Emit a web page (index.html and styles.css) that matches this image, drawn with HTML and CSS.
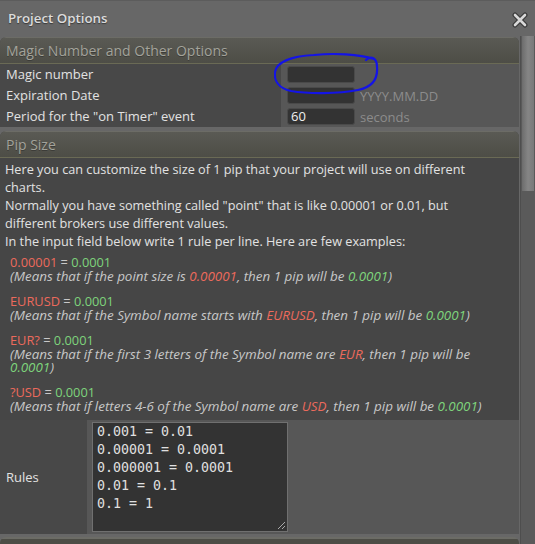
FILE: index.html
```html
<!DOCTYPE html>
<html>
<head>
<meta charset="utf-8">
<link rel="stylesheet" href="styles.css">
</head>
<body>
<div class="dialog">
  <div class="titlebar">
    <span class="title">Project Options</span>
    <svg class="close" width="16" height="16" viewBox="0 0 16 16">
      <path d="M3 3 L13 13 M13 3 L3 13" stroke="#3a3a3a" stroke-width="5" stroke-linecap="round"/>
      <path d="M3 3 L13 13 M13 3 L3 13" stroke="#d8d8d8" stroke-width="2.6" stroke-linecap="round"/>
    </svg>
  </div>
  <div class="main">
    <div class="content">
      <div class="panel">
        <div class="panel-head">Magic Number and Other Options</div>
        <div class="row">
          <div class="label">Magic number</div>
          <div class="field"><span class="input"></span></div>
        </div>
        <div class="row">
          <div class="label">Expiration Date</div>
          <div class="field"><span class="input"></span><span class="hint">YYYY.MM.DD</span></div>
        </div>
        <div class="row">
          <div class="label">Period for the "on Timer" event</div>
          <div class="field"><span class="input">60</span><span class="hint">seconds</span></div>
        </div>
      </div>
      <div class="panel">
        <div class="panel-head">Pip Size</div>
        <div class="desc">
          Here you can customize the size of 1 pip that your project will use on different charts.<br>
          Normally you have something called "point" that is like 0.00001 or 0.01, but different brokers use different values.<br>
          In the input field below write 1 rule per line. Here are few examples:
        </div>
        <div class="examples">
          <div class="ex"><div class="ex-rule"><span class="r">0.00001</span> = <span class="g">0.0001</span></div><i>(Means that if the point size is <span class="r">0.00001</span>, then 1 pip will be <span class="g">0.0001</span>)</i></div>
          <div class="ex"><div class="ex-rule"><span class="r">EURUSD</span> = <span class="g">0.0001</span></div><i>(Means that if the Symbol name starts with <span class="r">EURUSD</span>, then 1 pip will be <span class="g">0.0001</span>)</i></div>
          <div class="ex"><div class="ex-rule"><span class="r">EUR?</span> = <span class="g">0.0001</span></div><i>(Means that if the first 3 letters of the Symbol name are <span class="r">EUR</span>, then 1 pip will be <span class="g">0.0001</span>)</i></div>
          <div class="ex"><div class="ex-rule"><span class="r">?USD</span> = <span class="g">0.0001</span></div><i>(Means that if letters 4-6 of the Symbol name are <span class="r">USD</span>, then 1 pip will be <span class="g">0.0001</span>)</i></div>
        </div>
        <div class="rules">
          <div class="rules-label">Rules</div>
          <div class="rules-field">
            <div class="textarea">0.001 = 0.01
0.00001 = 0.0001
0.000001 = 0.0001
0.01 = 0.1
0.1 = 1</div>
          </div>
        </div>
      </div>
      <div class="panel next"></div>
    </div>
    <div class="scrollbar"><div class="thumb"></div></div>
  </div>
  <svg class="annot" width="108" height="44" viewBox="0 0 108 44">
    <path d="M92 8 C97 3 103 6 103 15 C104 27 99 35 84 38 C64 42 34 42 17 39 C4 36 0 28 1 20 C3 9 20 4 40 3 C60 1 85 2 100 7" fill="none" stroke="#1414e6" stroke-width="2.2" stroke-linecap="round"/>
  </svg>
</div>
</body>
</html>
```

FILE: styles.css
```css
html, body {
  margin: 0;
  padding: 0;
}
body {
  background: #676767;
  font-family: "Open Sans", "Noto Sans", sans-serif;
  width: 535px;
  height: 544px;
  overflow: hidden;
}
.dialog {
  position: relative;
  height: 544px;
  display: flex;
  flex-direction: column;
  border-top: 1px solid #5c5c5c;
  box-sizing: border-box;
}
.titlebar {
  height: 36px;
  flex: none;
  display: flex;
  align-items: center;
  justify-content: space-between;
  padding: 0 7px 0 8px;
}
.title {
  color: #dcdcdc;
  font-size: 13.3px;
  font-weight: 600;
  text-shadow: 0 1px 1px #3a3a3a;
  margin-top: -3px;
}
.close {
  margin-top: 1px;
}
.main {
  flex: 1;
  display: flex;
  min-height: 0;
}
.content {
  flex: 1;
  overflow: hidden;
}
.scrollbar {
  width: 14px;
  flex: none;
  background: #5a5a5a;
  border-left: 1px solid #4e4e4e;
  display: flex;
  flex-direction: column;
  margin-top: -1px;
}
.thumb {
  height: 155px;
  margin: 0 1px;
  background: linear-gradient(to right, #6c6c6c, #858585 50%, #7a7a7a);
}
.panel {
  border-radius: 6px 6px 0 0;
  overflow: hidden;
  margin-bottom: 4px;
  margin-right: 1px;
  background: #464646;
}
.panel-head {
  height: 25px;
  line-height: 26px;
  padding: 0 6px;
  font-size: 14px;
  color: #a3a39b;
  background: linear-gradient(to bottom, #5a5a54, #4d4d46);
  border-top: 1px solid #6c6c66;
  border-bottom: 1px solid #6a6a55;
  text-shadow: 0 1px 0 #3c3c38;
}
.row {
  display: grid;
  grid-template-columns: 281px 1fr;
  height: 21px;
}
.row:first-of-type {
  margin-top: 1px;
}
.label {
  background: #484848;
  color: #e2e2e2;
  font-size: 13px;
  line-height: 21px;
  padding-left: 6px;
}
.field {
  background: #575757;
  display: flex;
  align-items: center;
  padding-left: 6px;
}
.input {
  box-sizing: border-box;
  width: 68px;
  height: 17px;
  background: #333;
  border: 1px solid #4a4a4a;
  border-radius: 3px;
  color: #f0f0f0;
  font-size: 13px;
  line-height: 15px;
  padding-left: 3px;
}
.hint {
  color: #8c8c8c;
  font-size: 13px;
  margin-left: 5px;
}
.desc {
  color: #e2e2e2;
  font-size: 12.7px;
  line-height: 18px;
  padding: 2px 30px 0 5px;
}
.examples {
  padding: 6px 20px 0 10px;
  font-size: 13.4px;
  line-height: 13px;
  color: #c8c8c8;
}
.ex {
  margin-bottom: 12.5px;
}
.ex-rule {
  font-size: 12.8px;
  line-height: 13.5px;
}
.ex i {
  color: #c8c8c8;
}
.r {
  color: #ec6a5c;
}
.g {
  color: #7ed47c;
}
.rules {
  display: grid;
  grid-template-columns: 87px 1fr;
  height: 114px;
  margin-top: -5px;
}
.rules-label {
  background: #484848;
  color: #e2e2e2;
  font-size: 13px;
  display: flex;
  align-items: center;
  padding-left: 6px;
}
.rules-field {
  background: #575757;
  padding: 2px 0 0 5px;
}
.textarea {
  position: relative;
  box-sizing: border-box;
  width: 196px;
  height: 110px;
  background: #333;
  border: 1px solid #707070;
  color: #e0e0e0;
  font-family: "DejaVu Sans Mono", monospace;
  font-size: 13.3px;
  line-height: 18px;
  padding: 0 4px;
  white-space: pre;
}
.textarea::after {
  content: "";
  position: absolute;
  right: 2px;
  bottom: 2px;
  width: 7px;
  height: 7px;
  background: linear-gradient(135deg, transparent 45%, #aaa 45%, #aaa 55%, transparent 55%, transparent 75%, #aaa 75%, #aaa 85%, transparent 85%);
}
.panel.next {
  height: 20px;
  margin-top: -1px;
  background: linear-gradient(to bottom, #6c6c66 0, #6c6c66 2px, #4d4d46 2px);
}
.annot {
  position: absolute;
  left: 274px;
  top: 51px;
}
```
